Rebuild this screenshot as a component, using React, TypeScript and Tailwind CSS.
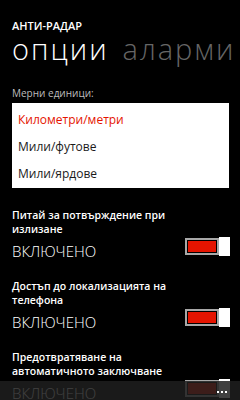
import React from 'react';

const font = { fontFamily: '"Open Sans", "Noto Sans", "DejaVu Sans", sans-serif' };

function Toggle() {
  return (
    <div className="flex items-center h-[19px]">
      <div className="w-[34px] h-[17px] border-2 border-[#a8a8a8] p-[1px]">
        <div className="w-full h-full bg-[#e51400]" />
      </div>
      <div className="w-[11px] h-[19px] bg-white" />
    </div>
  );
}

function Setting({ label, first }: { label: string[]; first?: boolean }) {
  return (
    <div className={first ? 'mt-[20px]' : 'mt-[18px]'}>
      <div className="text-[10.5px] leading-[14px] font-semibold text-white">
        {label.map((l) => (
          <div key={l}>{l}</div>
        ))}
      </div>
      <div className="flex items-start justify-between mt-[5px]">
        <div className="text-[15px] leading-[20px] font-light text-white">ВКЛЮЧЕНО</div>
        <div className="mt-[-4px] mr-[-1px]">
          <Toggle />
        </div>
      </div>
    </div>
  );
}

export default function App() {
  const units = ['Километри/метри', 'Мили/футове', 'Мили/ярдове'];

  return (
    <div className="relative w-[240px] h-[400px] overflow-hidden bg-black" style={font}>
      <div className="pt-[20px] pl-[12px] pr-[11px]">
        {/* Header */}
        <div className="text-[11px] leading-[12px] font-semibold text-white">АНТИ-РАДАР</div>
        <div className="flex gap-[14px] whitespace-nowrap text-[29px] leading-[28px] font-light tracking-[2px] mt-[3px]">
          <span className="text-white">опции</span>
          <span className="text-[#666666]">аларми</span>
        </div>

        {/* Units */}
        <div className="mt-[23px] text-[10px] leading-[14px] text-[#bdbdbd]">Мерни единици:</div>
        <div className="mt-[3px] h-[85px] bg-white pt-[3px] pl-[6px]">
          {units.map((u, i) => (
            <div
              key={u}
              className={`h-[27px] flex items-center text-[12px] ${i === 0 ? 'text-[#e51400]' : 'text-[#1a1a1a]'}`}
            >
              {u}
            </div>
          ))}
        </div>

        <Setting first label={['Питай за потвърждение при', 'излизане']} />
        <Setting label={['Достъп до локализацията на', 'телефона']} />
        <Setting label={['Предотвратяване на', 'автоматичното заключване']} />
      </div>

      {/* App bar */}
      <div className="absolute left-0 right-0 bottom-0 h-[19px] bg-[#1f1f1f]/85 flex justify-end items-center pr-[13px]">
        <div className="flex gap-[2px] mt-[2px]">
          <div className="w-[2px] h-[2px] bg-white" />
          <div className="w-[2px] h-[2px] bg-white" />
          <div className="w-[2px] h-[2px] bg-white" />
        </div>
      </div>
    </div>
  );
}
